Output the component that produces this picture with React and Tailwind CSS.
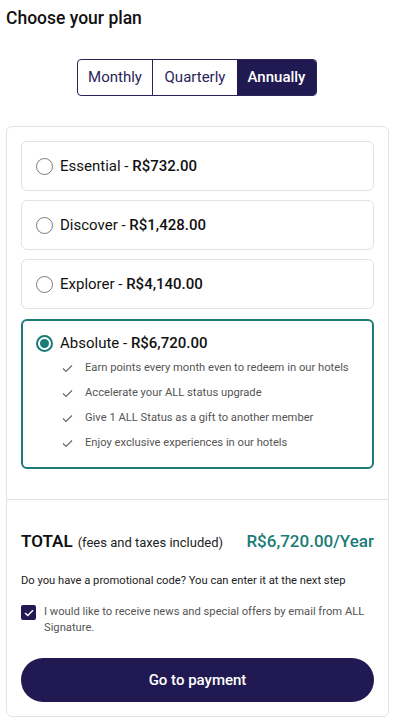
import React from "react";

const font = { fontFamily: "Roboto, 'Noto Sans', Arial, sans-serif" };

function Radio({ checked }) {
  if (checked) {
    return (
      <span className="w-[17px] h-[17px] rounded-full border-2 border-[#1b7b76] flex items-center justify-center shrink-0">
        <span className="w-[9px] h-[9px] rounded-full bg-[#1b7b76]" />
      </span>
    );
  }
  return <span className="w-[17px] h-[17px] rounded-full border-[1.5px] border-[#7a7a7a] shrink-0" />;
}

function Check() {
  return (
    <svg width="11" height="9" viewBox="0 0 11 9" className="shrink-0">
      <path d="M1 4.5 L4 7.5 L10 1.5" fill="none" stroke="#666" strokeWidth="1.1" />
    </svg>
  );
}

const plans = [
  { name: "Essential", price: "R$732.00" },
  { name: "Discover", price: "R$1,428.00" },
  { name: "Explorer", price: "R$4,140.00" },
];

const features = [
  "Earn points every month even to redeem in our hotels",
  "Accelerate your ALL status upgrade",
  "Give 1 ALL Status as a gift to another member",
  "Enjoy exclusive experiences in our hotels",
];

export default function App() {
  return (
    <div style={font} className="w-[400px] h-[720px] bg-white px-[6px] text-[#111] overflow-hidden">
      <div className="h-[36px] flex items-center text-[17.5px] font-medium text-[#111]">Choose your plan</div>
      <div className="mt-[23px] flex">
        <div className="ml-[71px] flex h-[37px] border border-[#2a2458] rounded-[4px] overflow-hidden text-[15px]">
          <div className="w-[75px] flex items-center justify-center text-[#2a2458] border-r border-[#2a2458]">Monthly</div>
          <div className="w-[84px] flex items-center justify-center text-[#2a2458]">Quarterly</div>
          <div className="w-[79px] flex items-center justify-center bg-[#211a52] text-white font-medium">Annually</div>
        </div>
      </div>
      <div className="mt-[30px] w-[383px] h-[591px] border border-[#e4e4e4] rounded-[6px] flex flex-col">
        <div className="px-[14px] pt-[14px] pb-[30px] border-b border-[#e4e4e4] flex flex-col gap-[9px]">
          {plans.map((p) => (
            <div key={p.name} className="h-[50px] border border-[#e2e2e2] rounded-[6px] flex items-center pl-[14px] gap-[7px] text-[15px]">
              <Radio />
              <span className="text-[#111]">
                {p.name} - <span className="font-medium">{p.price}</span>
              </span>
            </div>
          ))}
          <div className="h-[150px] border-2 border-[#1b7b76] rounded-[6px] pl-[13px] pt-[10px] pb-[12px] mt-[1px]">
            <div className="h-[24px] flex items-center gap-[7px] text-[15px]">
              <Radio checked />
              <span>
                Absolute - <span className="font-medium">R$6,720.00</span>
              </span>
            </div>
            <div className="flex flex-col mt-[1px]">
              {features.map((f) => (
                <div key={f} className="h-[25px] flex items-center pl-[26px] gap-[12px] text-[11.2px] text-[#555]">
                  <Check />
                  <span>{f}</span>
                </div>
              ))}
            </div>
          </div>
        </div>
        <div className="px-[14px] pt-[30px] flex flex-col">
          <div className="h-[24px] flex items-center justify-between">
            <div className="flex items-baseline">
              <span className="text-[17px] font-semibold text-[#111]">TOTAL</span>
              <span className="text-[13px] text-[#222] ml-[5px]">(fees and taxes included)</span>
            </div>
            <span className="text-[17px] font-medium text-[#1b7b76]">R$6,720.00/Year</span>
          </div>
          <div className="mt-[19px] h-[16px] leading-[16px] text-[11.2px] text-[#222]">
            Do you have a promotional code? You can enter it at the next step
          </div>
          <div className="mt-[15px] flex gap-[8px]">
            <span className="mt-[1px] w-[15px] h-[15px] rounded-[2px] bg-[#211a52] flex items-center justify-center shrink-0">
              <svg width="10" height="8" viewBox="0 0 10 8">
                <path d="M1 4 L3.8 6.6 L9 1.2" fill="none" stroke="white" strokeWidth="1.4" />
              </svg>
            </span>
            <span className="text-[11.2px] leading-[16px] text-[#555]">
              I would like to receive news and special offers by email from ALL Signature.
            </span>
          </div>
          <button className="mt-[22px] h-[44px] w-full rounded-full bg-[#211a52] text-white text-[15px] font-medium">
            Go to payment
          </button>
        </div>
      </div>
    </div>
  );
}
